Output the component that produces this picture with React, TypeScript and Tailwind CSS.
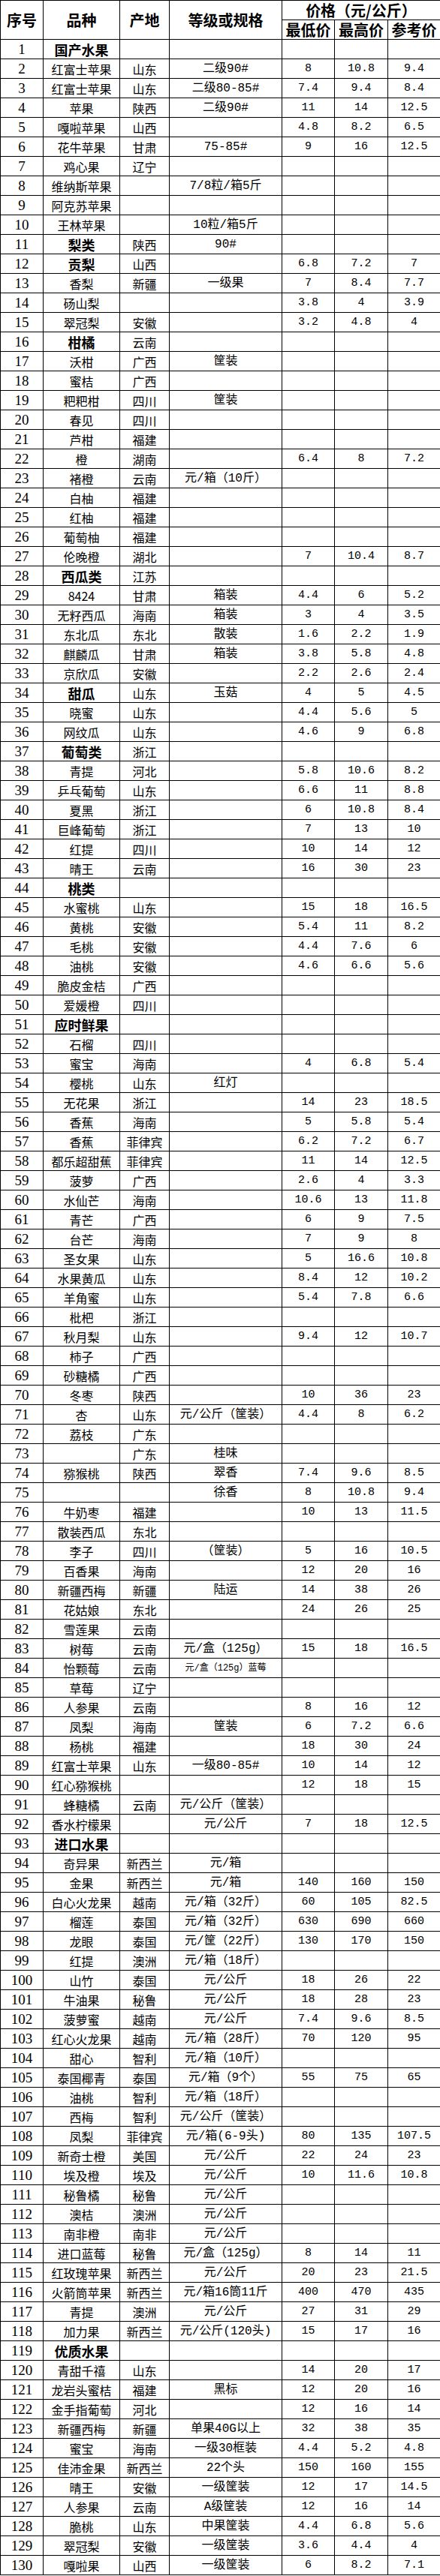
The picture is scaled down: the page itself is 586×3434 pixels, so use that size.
type Row = [number, string, string, string, string, string, string];

// 分类行（品种加粗）
const BOLD = new Set([1, 11, 12, 16, 28, 34, 37, 44, 51, 93, 119]);

const rows: Row[] = [
  [1, "国产水果", "", "", "", "", ""],
  [2, "红富士苹果", "山东", "二级90#", "8", "10.8", "9.4"],
  [3, "红富士苹果", "山东", "二级80-85#", "7.4", "9.4", "8.4"],
  [4, "苹果", "陕西", "二级90#", "11", "14", "12.5"],
  [5, "嘎啦苹果", "山西", "", "4.8", "8.2", "6.5"],
  [6, "花牛苹果", "甘肃", "75-85#", "9", "16", "12.5"],
  [7, "鸡心果", "辽宁", "", "", "", ""],
  [8, "维纳斯苹果", "", "7/8粒/箱5斤", "", "", ""],
  [9, "阿克苏苹果", "", "", "", "", ""],
  [10, "王林苹果", "", "10粒/箱5斤", "", "", ""],
  [11, "梨类", "陕西", "90#", "", "", ""],
  [12, "贡梨", "山西", "", "6.8", "7.2", "7"],
  [13, "香梨", "新疆", "一级果", "7", "8.4", "7.7"],
  [14, "砀山梨", "", "", "3.8", "4", "3.9"],
  [15, "翠冠梨", "安徽", "", "3.2", "4.8", "4"],
  [16, "柑橘", "云南", "", "", "", ""],
  [17, "沃柑", "广西", "筐装", "", "", ""],
  [18, "蜜桔", "广西", "", "", "", ""],
  [19, "粑粑柑", "四川", "筐装", "", "", ""],
  [20, "春见", "四川", "", "", "", ""],
  [21, "芦柑", "福建", "", "", "", ""],
  [22, "橙", "湖南", "", "6.4", "8", "7.2"],
  [23, "褚橙", "云南", "元/箱（10斤）", "", "", ""],
  [24, "白柚", "福建", "", "", "", ""],
  [25, "红柚", "福建", "", "", "", ""],
  [26, "葡萄柚", "福建", "", "", "", ""],
  [27, "伦晚橙", "湖北", "", "7", "10.4", "8.7"],
  [28, "西瓜类", "江苏", "", "", "", ""],
  [29, "8424", "甘肃", "箱装", "4.4", "6", "5.2"],
  [30, "无籽西瓜", "海南", "箱装", "3", "4", "3.5"],
  [31, "东北瓜", "东北", "散装", "1.6", "2.2", "1.9"],
  [32, "麒麟瓜", "甘肃", "箱装", "3.8", "5.8", "4.8"],
  [33, "京欣瓜", "安徽", "", "2.2", "2.6", "2.4"],
  [34, "甜瓜", "山东", "玉菇", "4", "5", "4.5"],
  [35, "晓蜜", "山东", "", "4.4", "5.6", "5"],
  [36, "网纹瓜", "山东", "", "4.6", "9", "6.8"],
  [37, "葡萄类", "浙江", "", "", "", ""],
  [38, "青提", "河北", "", "5.8", "10.6", "8.2"],
  [39, "乒乓葡萄", "山东", "", "6.6", "11", "8.8"],
  [40, "夏黑", "浙江", "", "6", "10.8", "8.4"],
  [41, "巨峰葡萄", "浙江", "", "7", "13", "10"],
  [42, "红提", "四川", "", "10", "14", "12"],
  [43, "晴王", "云南", "", "16", "30", "23"],
  [44, "桃类", "", "", "", "", ""],
  [45, "水蜜桃", "山东", "", "15", "18", "16.5"],
  [46, "黄桃", "安徽", "", "5.4", "11", "8.2"],
  [47, "毛桃", "安徽", "", "4.4", "7.6", "6"],
  [48, "油桃", "安徽", "", "4.6", "6.6", "5.6"],
  [49, "脆皮金桔", "广西", "", "", "", ""],
  [50, "爱媛橙", "四川", "", "", "", ""],
  [51, "应时鲜果", "", "", "", "", ""],
  [52, "石榴", "四川", "", "", "", ""],
  [53, "蜜宝", "海南", "", "4", "6.8", "5.4"],
  [54, "樱桃", "山东", "红灯", "", "", ""],
  [55, "无花果", "浙江", "", "14", "23", "18.5"],
  [56, "香蕉", "海南", "", "5", "5.8", "5.4"],
  [57, "香蕉", "菲律宾", "", "6.2", "7.2", "6.7"],
  [58, "都乐超甜蕉", "菲律宾", "", "11", "14", "12.5"],
  [59, "菠萝", "广西", "", "2.6", "4", "3.3"],
  [60, "水仙芒", "海南", "", "10.6", "13", "11.8"],
  [61, "青芒", "广西", "", "6", "9", "7.5"],
  [62, "台芒", "海南", "", "7", "9", "8"],
  [63, "圣女果", "山东", "", "5", "16.6", "10.8"],
  [64, "水果黄瓜", "山东", "", "8.4", "12", "10.2"],
  [65, "羊角蜜", "山东", "", "5.4", "7.8", "6.6"],
  [66, "枇杷", "浙江", "", "", "", ""],
  [67, "秋月梨", "山东", "", "9.4", "12", "10.7"],
  [68, "柿子", "广西", "", "", "", ""],
  [69, "砂糖橘", "广西", "", "", "", ""],
  [70, "冬枣", "陕西", "", "10", "36", "23"],
  [71, "杏", "山东", "元/公斤（筐装）", "4.4", "8", "6.2"],
  [72, "荔枝", "广东", "", "", "", ""],
  [73, "", "广东", "桂味", "", "", ""],
  [74, "猕猴桃", "陕西", "翠香", "7.4", "9.6", "8.5"],
  [75, "", "", "徐香", "8", "10.8", "9.4"],
  [76, "牛奶枣", "福建", "", "10", "13", "11.5"],
  [77, "散装西瓜", "东北", "", "", "", ""],
  [78, "李子", "四川", "（筐装）", "5", "16", "10.5"],
  [79, "百香果", "海南", "", "12", "20", "16"],
  [80, "新疆西梅", "新疆", "陆运", "14", "38", "26"],
  [81, "花姑娘", "东北", "", "24", "26", "25"],
  [82, "雪莲果", "云南", "", "", "", ""],
  [83, "树莓", "云南", "元/盒（125g）", "15", "18", "16.5"],
  [84, "怡颗莓", "云南", "元/盒（125g）蓝莓", "", "", ""],
  [85, "草莓", "辽宁", "", "", "", ""],
  [86, "人参果", "云南", "", "8", "16", "12"],
  [87, "凤梨", "海南", "筐装", "6", "7.2", "6.6"],
  [88, "杨桃", "福建", "", "18", "30", "24"],
  [89, "红富士苹果", "山东", "一级80-85#", "10", "14", "12"],
  [90, "红心猕猴桃", "", "", "12", "18", "15"],
  [91, "蜂糖橘", "云南", "元/公斤（筐装）", "", "", ""],
  [92, "香水柠檬果", "", "元/公斤", "7", "18", "12.5"],
  [93, "进口水果", "", "", "", "", ""],
  [94, "奇异果", "新西兰", "元/箱", "", "", ""],
  [95, "金果", "新西兰", "元/箱", "140", "160", "150"],
  [96, "白心火龙果", "越南", "元/箱（32斤）", "60", "105", "82.5"],
  [97, "榴莲", "泰国", "元/箱（32斤）", "630", "690", "660"],
  [98, "龙眼", "泰国", "元/筐（22斤）", "130", "170", "150"],
  [99, "红提", "澳洲", "元/箱（18斤）", "", "", ""],
  [100, "山竹", "泰国", "元/公斤", "18", "26", "22"],
  [101, "牛油果", "秘鲁", "元/公斤", "18", "28", "23"],
  [102, "菠萝蜜", "越南", "元/公斤", "7.4", "9.6", "8.5"],
  [103, "红心火龙果", "越南", "元/箱（28斤）", "70", "120", "95"],
  [104, "甜心", "智利", "元/箱（10斤）", "", "", ""],
  [105, "泰国椰青", "泰国", "元/箱（9个）", "55", "75", "65"],
  [106, "油桃", "智利", "元/箱（18斤）", "", "", ""],
  [107, "西梅", "智利", "元/公斤（筐装）", "", "", ""],
  [108, "凤梨", "菲律宾", "元/箱(6-9头)", "80", "135", "107.5"],
  [109, "新奇士橙", "美国", "元/公斤", "22", "24", "23"],
  [110, "埃及橙", "埃及", "元/公斤", "10", "11.6", "10.8"],
  [111, "秘鲁橘", "秘鲁", "元/公斤", "", "", ""],
  [112, "澳桔", "澳洲", "元/公斤", "", "", ""],
  [113, "南非橙", "南非", "元/公斤", "", "", ""],
  [114, "进口蓝莓", "秘鲁", "元/盒（125g）", "8", "14", "11"],
  [115, "红玫瑰苹果", "新西兰", "元/公斤", "20", "23", "21.5"],
  [116, "火箭筒苹果", "新西兰", "元/箱16筒11斤", "400", "470", "435"],
  [117, "青提", "澳洲", "元/公斤", "27", "31", "29"],
  [118, "加力果", "新西兰", "元/公斤(120头)", "15", "17", "16"],
  [119, "优质水果", "", "", "", "", ""],
  [120, "青甜千禧", "山东", "", "14", "20", "17"],
  [121, "龙岩头蜜桔", "福建", "黑标", "12", "20", "16"],
  [122, "金手指葡萄", "河北", "", "12", "16", "14"],
  [123, "新疆西梅", "新疆", "单果40G以上", "32", "38", "35"],
  [124, "蜜宝", "海南", "一级30框装", "4.4", "5.2", "4.8"],
  [125, "佳沛金果", "新西兰", "22个头", "150", "160", "155"],
  [126, "晴王", "安徽", "一级筐装", "12", "17", "14.5"],
  [127, "人参果", "云南", "A级筐装", "12", "16", "14"],
  [128, "脆桃", "山东", "中果筐装", "4.4", "6.8", "5.6"],
  [129, "翠冠梨", "安徽", "一级筐装", "3.6", "4.4", "4"],
  [130, "嘎啦果", "山西", "一级筐装", "6", "8.2", "7.1"],
];

const cell = "border border-black p-0 text-center align-middle leading-none whitespace-nowrap";
const head = `${cell} font-bold text-[20px]`;
const price = `${cell} font-['Liberation_Mono','Noto_Sans_CJK_SC',monospace] text-[15px]`;

const PriceTable = () => (
  <table className="w-[586px] table-fixed border-collapse bg-white text-black font-['Noto_Sans_CJK_SC',sans-serif]">
    <colgroup>
      <col className="w-[57px]" />
      <col className="w-[102px]" />
      <col className="w-[66px]" />
      <col className="w-[150px]" />
      <col className="w-[70px]" />
      <col className="w-[71px]" />
      <col className="w-[70px]" />
    </colgroup>
    <thead>
      <tr className="h-[26px]">
        <th rowSpan={2} className={head}>序号</th>
        <th rowSpan={2} className={head}>品种</th>
        <th rowSpan={2} className={head}>产地</th>
        <th rowSpan={2} className={head}>等级或规格</th>
        <th colSpan={3} className={head}>价格（元/公斤）</th>
      </tr>
      <tr className="h-[26px]">
        <th className={head}>最低价</th>
        <th className={head}>最高价</th>
        <th className={head}>参考价</th>
      </tr>
    </thead>
    <tbody>
      {rows.map(([no, name, origin, spec, lo, hi, ref]) => (
        <tr key={no} className="h-[26px]">
          <td className={`${cell} font-['Liberation_Serif',serif] text-[19px]`}>{no}</td>
          <td className={BOLD.has(no) ? `${cell} font-bold text-[18px]` : `${cell} text-[16px]`}>{name}</td>
          <td className={`${cell} text-[16px]`}>{origin}</td>
          <td
            className={`${cell} font-['Liberation_Mono','Noto_Sans_CJK_SC',monospace] ${
              no === 84 ? "text-[12px]" : "text-[16px]"
            }`}
          >
            {spec}
          </td>
          <td className={price}>{lo}</td>
          <td className={price}>{hi}</td>
          <td className={price}>{ref}</td>
        </tr>
      ))}
    </tbody>
  </table>
);

export default function App() {
  return (
    <div className="w-[586px] bg-white">
      <PriceTable />
    </div>
  );
}
